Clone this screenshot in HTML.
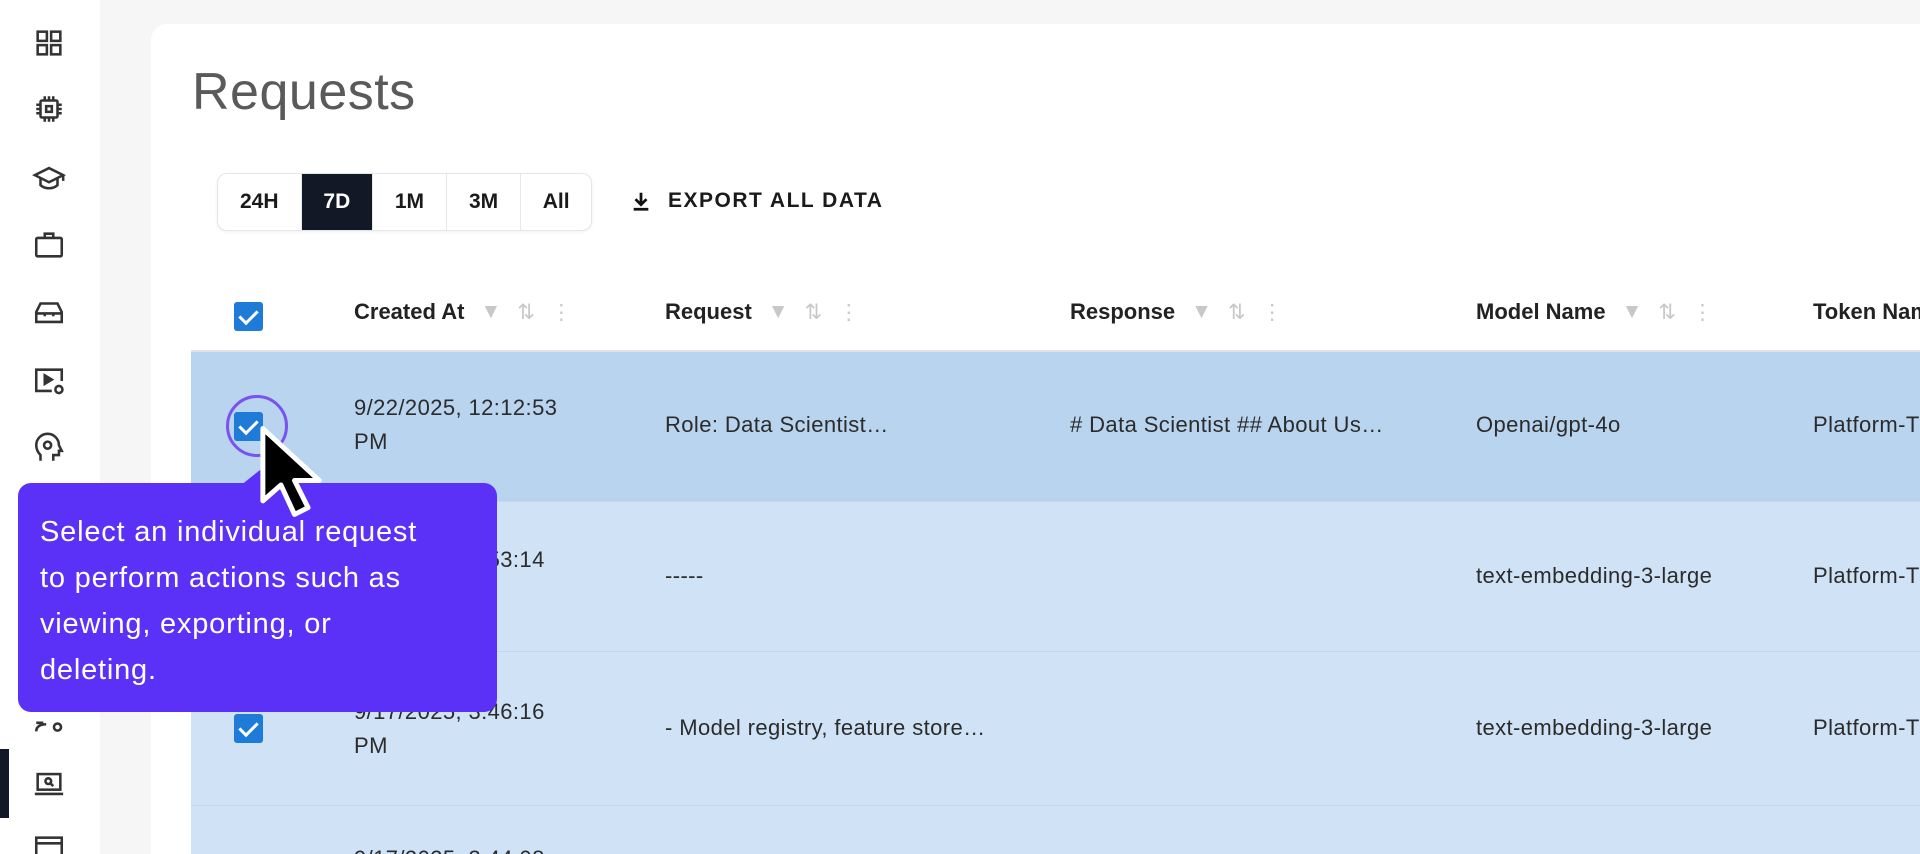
<!DOCTYPE html>
<html><head><meta charset="utf-8">
<style>
*{margin:0;padding:0;box-sizing:border-box}
html{width:1920px;height:854px;overflow:hidden}
body{width:1920px;height:854px;overflow:hidden;background:#f6f6f6;font-family:"Liberation Sans",Arial,sans-serif;position:relative;color:#222}
.side{position:absolute;left:0;top:0;width:100px;height:854px;background:#fff}
.side svg{position:absolute;left:32px;width:34px;height:34px;fill:none;stroke:#333;stroke-width:1.8}
.card{position:absolute;left:151px;top:24px;width:1769px;height:830px;background:#fff;border-radius:16px 0 0 0}
h1{position:absolute;left:192px;top:62px;font-size:52px;font-weight:normal;color:#5a5a5a;letter-spacing:.5px}
.seg{position:absolute;left:217px;top:173px;height:58px;width:375px;border:1px solid #e4e6ea;border-radius:10px;display:flex;overflow:hidden;box-shadow:0 1px 3px rgba(0,0,0,.06)}
.seg div{display:flex;align-items:center;justify-content:center;font-weight:bold;font-size:21px;border-right:1px solid #e8e8e8;color:#1a1a1a}
.seg .on{background:#121826;color:#fff}
.exp{position:absolute;left:630px;top:189px;font-size:21px;font-weight:bold;letter-spacing:1.5px;color:#1a1a1a;display:flex;align-items:center;gap:16px}
.th{position:absolute;top:299px;font-size:22px;font-weight:bold;color:#222;display:flex;align-items:center;white-space:nowrap}
.th i{font-style:normal;color:#c8c8c8;font-weight:normal;margin-left:16px;font-size:21px}
.cb{position:absolute;width:29px;height:29px;background:#1e7bd8;border-radius:3px}
.cb:after{content:"";position:absolute;left:9px;top:4px;width:8px;height:15px;border:solid #fff;border-width:0 3px 3px 0;transform:rotate(45deg)}
.row{position:absolute;left:191px;width:1729px}
.cell{position:absolute;font-size:22px;color:#2b2b2b;line-height:34px;letter-spacing:.4px;white-space:nowrap}
.tip{position:absolute;left:18px;top:483px;width:479px;height:229px;background:#5b31f8;border-radius:13px;color:#fff;font-size:29px;line-height:46px;padding:26px 0 0 22px;letter-spacing:.8px}
</style></head><body>
<div class="side">
<svg style="top:26px" viewBox="0 0 24 24"><rect x="4" y="4" width="6.5" height="6.5"/><rect x="13.5" y="4" width="6.5" height="6.5"/><rect x="4" y="13.5" width="6.5" height="6.5"/><rect x="13.5" y="13.5" width="6.5" height="6.5"/></svg>
<svg style="top:92px" viewBox="0 0 24 24"><rect x="6" y="6" width="12" height="12" rx="1"/><rect x="10" y="10" width="4" height="4"/><path d="M9 3v3M12 3v3M15 3v3M9 18v3M12 18v3M15 18v3M3 9h3M3 12h3M3 15h3M18 9h3M18 12h3M18 15h3"/></svg>
<svg style="top:161px" viewBox="0 0 24 24"><path d="M2 10l10-5 10 5-10 5z M6 12v5c3 3 9 3 12 0v-5 M22 10v4"/></svg>
<svg style="top:228px" viewBox="0 0 24 24"><rect x="3" y="7" width="18" height="13" rx="1"/><path d="M9 7V4h6v3"/></svg>
<svg style="top:295px" viewBox="0 0 24 24"><path d="M3 12l3-6h12l3 6v7H3z M3 13h18 M9 13v2 M15 13v2"/></svg>
<svg style="top:364px" viewBox="0 0 24 24"><path d="M14 19H3V4h18v8"/><path d="M9 8l5 3-5 3z" fill="#333"/><circle cx="19" cy="18" r="2.5"/></svg>
<svg style="top:431px" viewBox="0 0 24 24"><path d="M6 21v-4c-2-2-3-4-3-7a8 8 0 0 1 16 0l2 4h-2v3h-4v4"/><circle cx="11" cy="10" r="2.5"/></svg>
<svg style="top:703px" viewBox="0 0 24 24"><path d="M3 20c0-4 4-5 7-5 M3 14h5"/><circle cx="18" cy="17" r="2.5"/></svg>
<div style="position:absolute;left:0;top:749px;width:9px;height:69px;background:#121826"></div>
<svg style="top:767px" viewBox="0 0 24 24"><rect x="4" y="5" width="16" height="11"/><path d="M2 19h20"/><circle cx="11.5" cy="10" r="2"/><path d="M13 11.5l2 2"/></svg>
<svg style="top:832px" viewBox="0 0 24 24"><rect x="3" y="4" width="18" height="14"/><path d="M3 8h18"/></svg>
</div>
<div class="card"></div>
<h1>Requests</h1>
<div class="seg"><div style="width:84px">24H</div><div class="on" style="width:72px">7D</div><div style="width:74px">1M</div><div style="width:75px">3M</div><div style="width:70px;border:0">All</div></div>
<div class="exp"><svg width="22" height="24" viewBox="0 0 24 24"><path d="M12 3v12M6 10l6 6 6-6" stroke="#111" stroke-width="3" fill="none"/><path d="M4 21h16" stroke="#111" stroke-width="3"/></svg>EXPORT ALL DATA</div>
<div class="cb" style="left:234px;top:302px"></div>
<div class="th" style="left:354px">Created At<i>▼</i><i>⇅</i><i>⋮</i></div>
<div class="th" style="left:665px">Request<i>▼</i><i>⇅</i><i>⋮</i></div>
<div class="th" style="left:1070px">Response<i>▼</i><i>⇅</i><i>⋮</i></div>
<div class="th" style="left:1476px">Model Name<i>▼</i><i>⇅</i><i>⋮</i></div>
<div class="th" style="left:1813px">Token Name</div>
<div style="position:absolute;left:191px;top:350px;width:1729px;height:2px;background:#e2e2e2"></div>
<div class="row" style="top:352px;height:149px;background:#b8d4ef"></div>
<div class="row" style="top:501px;height:150px;background:#cfe2f6;border-top:1px solid #c3d7ec"></div>
<div class="row" style="top:651px;height:154px;background:#cfe2f6;border-top:1px solid #c3d7ec"></div>
<div class="row" style="top:805px;height:49px;background:#cfe2f6;border-top:1px solid #c3d7ec"></div>
<div class="cb" style="left:234px;top:412px"></div>
<div class="cb" style="left:234px;top:714px"></div>
<div class="cell" style="left:354px;top:391px">9/22/2025, 12:12:53<br>PM</div>
<div class="cell" style="left:665px;top:408px">Role: Data Scientist…</div>
<div class="cell" style="left:1070px;top:408px"># Data Scientist ## About Us…</div>
<div class="cell" style="left:1476px;top:408px">Openai/gpt-4o</div>
<div class="cell" style="left:1813px;top:408px">Platform-T</div>
<div class="cell" style="left:354px;top:543px">9/19/2025, 4:53:14<br>PM</div>
<div class="cell" style="left:665px;top:559px">-----</div>
<div class="cell" style="left:1476px;top:559px">text-embedding-3-large</div>
<div class="cell" style="left:1813px;top:559px">Platform-T</div>
<div class="cell" style="left:354px;top:695px">9/17/2025, 3:46:16<br>PM</div>
<div class="cell" style="left:665px;top:711px">- Model registry, feature store…</div>
<div class="cell" style="left:1476px;top:711px">text-embedding-3-large</div>
<div class="cell" style="left:1813px;top:711px">Platform-T</div>
<div class="cell" style="left:354px;top:842px">9/17/2025, 3:44:08</div>
<div style="position:absolute;left:226px;top:395px;width:62px;height:62px;border:3px solid #7a52f0;border-radius:50%"></div>
<div style="position:absolute;left:240px;top:470px;width:0;height:0;border-left:20px solid transparent;border-right:20px solid transparent;border-bottom:16px solid #5b31f8"></div>
<div class="tip">Select an individual request<br>to perform actions such as<br>viewing, exporting, or<br>deleting.</div>
<svg style="position:absolute;left:256px;top:424px" width="68" height="104" viewBox="0 0 30 46"><path d="M3 2v32l8-7 6 13 6-3-6-12h11z" fill="#000" stroke="#fff" stroke-width="2.2" stroke-linejoin="round"/></svg>
</body></html>
